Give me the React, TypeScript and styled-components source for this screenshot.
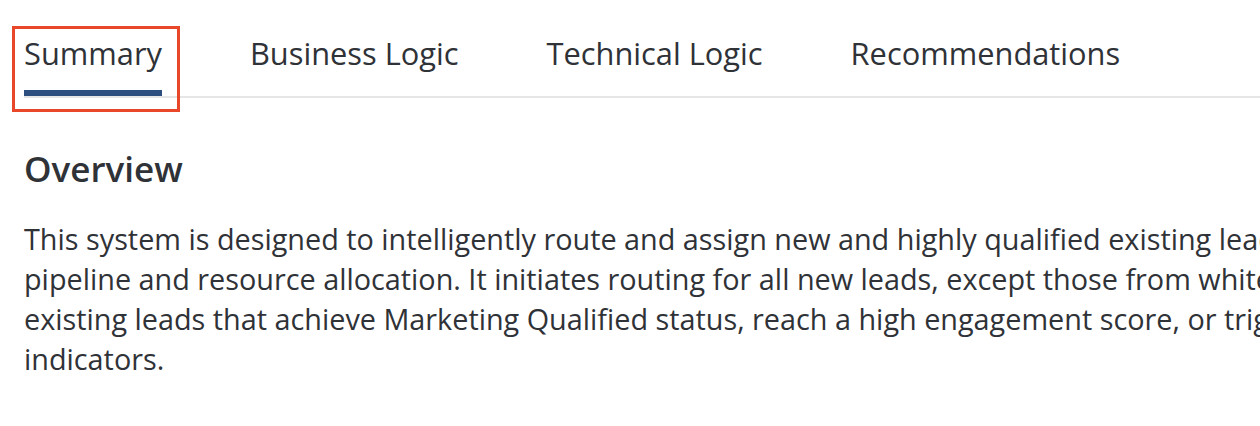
import React, { useState } from 'react'
import styled, { createGlobalStyle } from 'styled-components'

const GlobalStyle = createGlobalStyle`
  html, body {
    margin: 0;
    padding: 0;
    background: #ffffff;
    overflow: hidden;
  }
  body {
    font-family: "Open Sans", "Noto Sans", sans-serif;
    color: #2f3237;
  }
`

const Page = styled.div`
  width: 1700px;
  padding: 32px 0 0 24px;
`

const TabBar = styled.div`
  display: flex;
  gap: 88px;
  border-bottom: 2px solid #e6e6e6;
`

const Tab = styled.div<{ $active?: boolean }>`
  position: relative;
  font-size: 30.8px;
  line-height: 42px;
  padding-bottom: 16px;
  color: #2f3237;
  cursor: pointer;
  border-bottom: 6px solid ${(p) => (p.$active ? '#2c4f7f' : 'transparent')};
`

const Highlight = styled.span`
  position: absolute;
  left: -12px;
  right: -18px;
  top: -6px;
  bottom: -22px;
  border: 3px solid #e9472a;
  pointer-events: none;
`

const Content = styled.div`
  padding-top: 47px;
`

const Heading = styled.h2`
  margin: 0 0 26px;
  font-size: 35px;
  font-weight: 600;
  line-height: 48px;
  color: #2f3237;
`

const Body = styled.p`
  margin: 0;
  font-size: 28.8px;
  line-height: 40px;
  color: #2f3237;
`

const tabs = ['Summary', 'Business Logic', 'Technical Logic', 'Recommendations']

const App = () => {
  const [active, setActive] = useState('Summary')

  return (
    <>
      <GlobalStyle />
      <Page>
        <TabBar>
          {tabs.map((t) => (
            <Tab key={t} $active={t === active} onClick={() => setActive(t)}>
              {t}
              {t === 'Summary' && <Highlight />}
            </Tab>
          ))}
        </TabBar>
        <Content>
          <Heading>Overview</Heading>
          <Body>
            This system is designed to intelligently route and assign new and highly qualified existing leads to optimize the sales
            <br />
            pipeline and resource allocation. It initiates routing for all new leads, except those from whitelisted domains, and for
            <br />
            existing leads that achieve Marketing Qualified status, reach a high engagement score, or trigger key buying intent
            <br />
            indicators.
          </Body>
        </Content>
      </Page>
    </>
  )
}

export default App
